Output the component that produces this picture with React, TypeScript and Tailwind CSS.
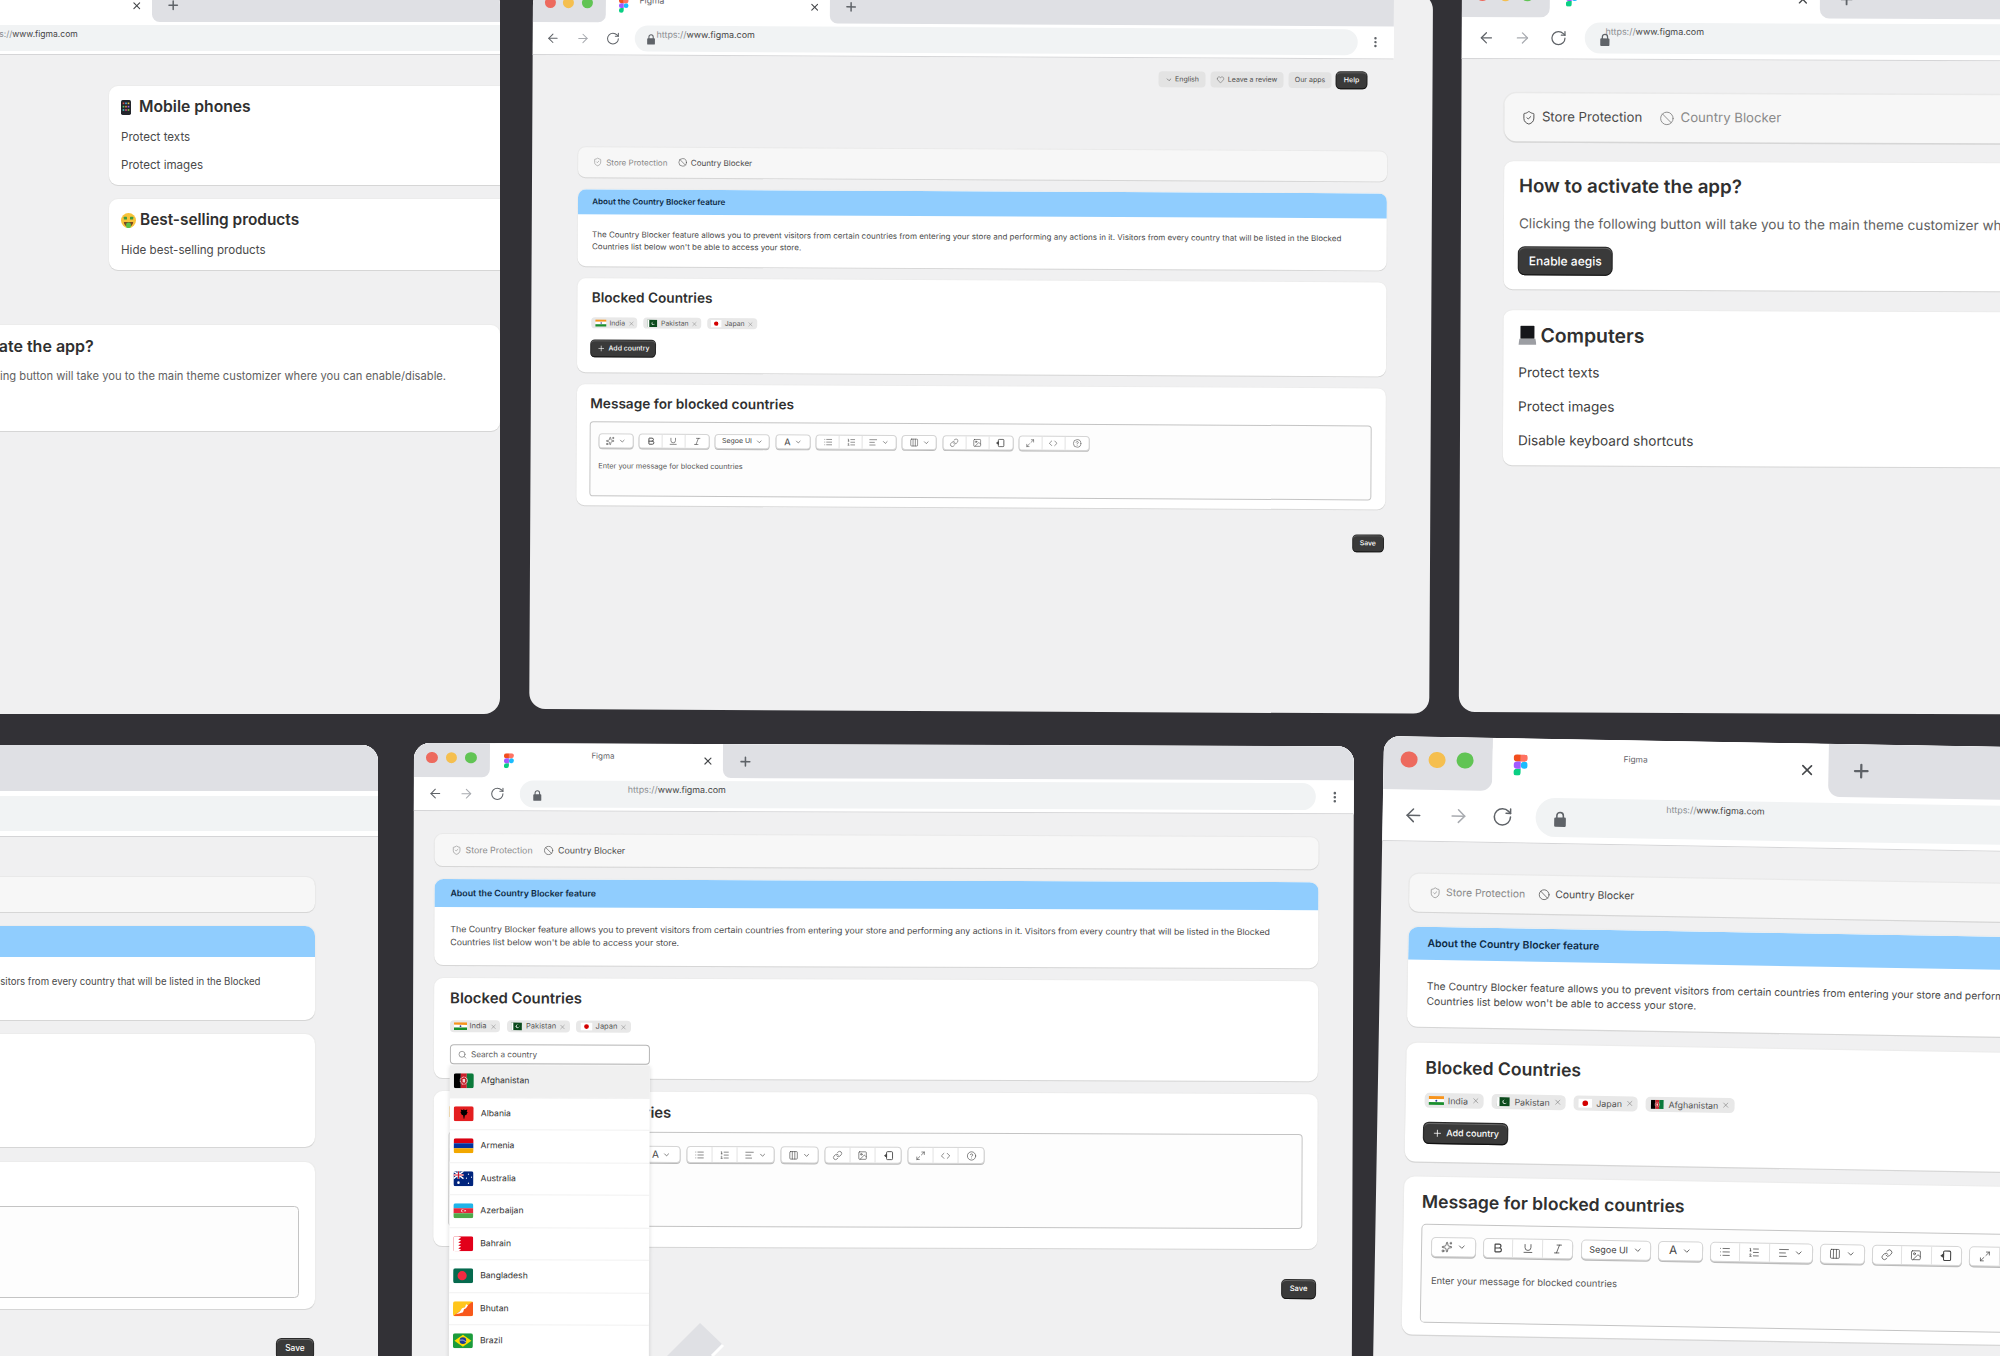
import type { ReactNode } from "react";
import clsx from "clsx";
import {
  AlignLeft,
  ArrowLeft,
  ArrowRight,
  Ban,
  Bold,
  ChevronDown,
  CircleHelp,
  Code,
  Columns3,
  EllipsisVertical,
  Heart,
  Image,
  Italic,
  Link,
  List,
  ListOrdered,
  Maximize2,
  Plus,
  RotateCw,
  Search,
  ShieldCheck,
  Sparkles,
  Underline,
  X,
} from "lucide-react";

const CARD = "rounded-[9px] bg-white shadow-[0_1px_0_#d6d6d6,0_0_0_1px_#ececec]";
const DARK_BTN =
  "rounded-[4px] bg-[#3a3a3a] text-white font-medium shadow-[0_1px_0_#111,0_0_0_1px_#2a2a2a,inset_0_1px_0_#666]";

function FigmaLogo({ className }: { className?: string }) {
  return (
    <svg viewBox="0 0 38 57" className={className}>
      <path d="M19 28.5a9.5 9.5 0 1 1 19 0 9.5 9.5 0 0 1-19 0z" fill="#1ABCFE" />
      <path d="M0 47.5A9.5 9.5 0 0 1 9.5 38H19v9.5a9.5 9.5 0 1 1-19 0z" fill="#0ACF83" />
      <path d="M19 0v19h9.5a9.5 9.5 0 1 0 0-19H19z" fill="#FF7262" />
      <path d="M0 9.5A9.5 9.5 0 0 0 9.5 19H19V0H9.5A9.5 9.5 0 0 0 0 9.5z" fill="#F24E1E" />
      <path d="M0 28.5A9.5 9.5 0 0 0 9.5 38H19V19H9.5A9.5 9.5 0 0 0 0 28.5z" fill="#A259FF" />
    </svg>
  );
}

function LockIcon() {
  return (
    <svg viewBox="0 0 10 13" className="h-[12px] w-[9px] shrink-0 translate-y-[1px]">
      <path d="M2.5 6V3.8a2.5 2.5 0 0 1 5 0V6" fill="none" stroke="#5f6368" strokeWidth="1.2" />
      <rect x="0.5" y="5.2" width="9" height="7.3" rx="1" fill="#5f6368" />
    </svg>
  );
}

function Flag({ code, className }: { code: string; className?: string }) {
  const cls = clsx("shrink-0 rounded-[2px]", className);
  switch (code) {
    case "in":
      return (
        <svg viewBox="0 0 20 12" className={cls}>
          <rect width="20" height="4" fill="#f7941d" />
          <rect y="4" width="20" height="4" fill="#fff" />
          <rect y="8" width="20" height="4" fill="#1a8f2e" />
          <circle cx="10" cy="6" r="1.3" fill="#2b3a8f" />
        </svg>
      );
    case "pk":
      return (
        <svg viewBox="0 0 20 15" className={cls}>
          <rect width="20" height="15" fill="#0b4a1c" />
          <rect width="4" height="15" fill="#fff" />
          <circle cx="12" cy="7.5" r="3.4" fill="#fff" />
          <circle cx="13" cy="6.8" r="3" fill="#0b4a1c" />
        </svg>
      );
    case "jp":
      return (
        <svg viewBox="0 0 20 14" className={cls}>
          <rect width="20" height="14" fill="#fff" />
          <circle cx="10" cy="7" r="4.2" fill="#d30000" />
        </svg>
      );
    case "af":
      return (
        <svg viewBox="0 0 20 15" className={cls}>
          <rect width="7" height="15" fill="#000" />
          <rect x="7" width="6" height="15" fill="#c8202a" />
          <rect x="13" width="7" height="15" fill="#0b7a3b" />
          <circle cx="10" cy="7.5" r="3.6" fill="none" stroke="#f4d6d6" strokeWidth="1" strokeDasharray="1 0.6" />
          <rect x="8.8" y="5.8" width="2.4" height="3.4" fill="#f4d6d6" />
        </svg>
      );
    case "al":
      return (
        <svg viewBox="0 0 20 15" className={cls}>
          <rect width="20" height="15" fill="#e41e20" />
          <path d="M10 2.5l1 1.6 2.6-.8-.6 2.6 1-.2-1.4 3-1.4.4-.6 3.4-.6 0-.6-3.4-1.4-.4-1.4-3 1 .2-.6-2.6 2.6.8z" fill="#000" />
        </svg>
      );
    case "am":
      return (
        <svg viewBox="0 0 20 15" className={cls}>
          <rect width="20" height="5" fill="#d90012" />
          <rect y="5" width="20" height="5" fill="#0033a0" />
          <rect y="10" width="20" height="5" fill="#f2a800" />
        </svg>
      );
    case "au":
      return (
        <svg viewBox="0 0 20 15" className={cls}>
          <rect width="20" height="15" fill="#00247d" />
          <path d="M0 0l10 7.5M10 0L0 7.5" stroke="#fff" strokeWidth="1.4" />
          <path d="M5 0v7.5M0 3.75h10" stroke="#fff" strokeWidth="2" />
          <path d="M5 0v7.5M0 3.75h10" stroke="#cf142b" strokeWidth="1" />
          <circle cx="5" cy="11.5" r="1.3" fill="#fff" />
          <circle cx="15" cy="3" r="0.6" fill="#fff" />
          <circle cx="18" cy="6" r="0.6" fill="#fff" />
          <circle cx="13" cy="7" r="0.6" fill="#fff" />
          <circle cx="15" cy="12" r="0.7" fill="#fff" />
        </svg>
      );
    case "az":
      return (
        <svg viewBox="0 0 20 15" className={cls}>
          <rect width="20" height="5" fill="#20b4e8" />
          <rect y="5" width="20" height="5" fill="#e4283c" />
          <rect y="10" width="20" height="5" fill="#4eaa4a" />
          <circle cx="9.5" cy="7.5" r="1.7" fill="#fff" />
          <circle cx="10" cy="7.5" r="1.4" fill="#e4283c" />
          <circle cx="11.8" cy="7.5" r="0.7" fill="#fff" />
        </svg>
      );
    case "bh":
      return (
        <svg viewBox="0 0 20 15" className={cls}>
          <rect width="20" height="15" fill="#e2001a" />
          <path d="M0 0h5L8 1.5 5 3l3 1.5L5 6l3 1.5L5 9l3 1.5L5 12l3 1.5L5 15H0z" fill="#fff" />
        </svg>
      );
    case "bd":
      return (
        <svg viewBox="0 0 20 15" className={cls}>
          <rect width="20" height="15" fill="#066a4e" />
          <circle cx="9" cy="7.5" r="4.6" fill="#f42a41" />
        </svg>
      );
    case "bt":
      return (
        <svg viewBox="0 0 20 15" className={cls}>
          <rect width="20" height="15" fill="#ffc61c" />
          <path d="M20 0v15H0z" fill="#f8581c" />
          <path d="M3 13l4-3 2-3 3-1 1-3 2 1-2 3-2 1-1 3-3 1z" fill="#fff" />
        </svg>
      );
    default:
      return (
        <svg viewBox="0 0 20 15" className={cls}>
          <rect width="20" height="15" fill="#1c9c3c" />
          <path d="M10 1.5L18.5 7.5 10 13.5 1.5 7.5z" fill="#fddc00" />
          <circle cx="10" cy="7.5" r="3.3" fill="#1f3a93" />
          <path d="M7 7a6 6 0 0 1 6 1.6" stroke="#fff" strokeWidth="0.6" fill="none" />
        </svg>
      );
  }
}

type ChromeProps = {
  zoom: string;
  url: string;
  tabText?: string;
  open?: boolean;
  width?: string;
  strip?: string;
  bar?: string;
};

function Chrome({ zoom, url, tabText, open, width, strip, bar }: ChromeProps) {
  return (
    <div className={clsx("shrink-0 bg-white", zoom, width)}>
      <div className={clsx("flex bg-white", strip ?? "h-[34px]")}>
        <div className="flex w-[76px] shrink-0 items-center gap-[8px] rounded-br-[8px] bg-[#dfe0e4] pb-[5px] pl-[12px]">
          <span className="h-[11.5px] w-[11.5px] rounded-full bg-[#ed6a5e]" />
          <span className="h-[11.5px] w-[11.5px] rounded-full bg-[#f5bf4f]" />
          <span className="h-[11.5px] w-[11.5px] rounded-full bg-[#61c454]" />
        </div>
        <div className="flex w-[233px] shrink-0 items-center justify-between rounded-t-[8px] bg-white pl-[14px] pr-[9px] text-[#5f6368]">
          <FigmaLogo className="h-[15px] w-[10px]" />
          <span className={clsx("mt-[-10px]", tabText ?? "ml-[-10px] text-[8px]")}>Figma</span>
          <X size={12} strokeWidth={2.3} className="text-[#45474a]" />
        </div>
        <div className="flex flex-1 items-center rounded-bl-[8px] bg-[#dfe0e4] pl-[15px] text-[#5f6368]">
          <Plus size={15} strokeWidth={2.5} />
        </div>
      </div>
      <div className={clsx("flex items-center border-b border-[#d5d5d7] bg-white pl-[14px]", bar ?? "h-[34px]")}>
        <ArrowLeft size={15} strokeWidth={1.7} className="text-[#5f6368]" />
        <ArrowRight size={15} strokeWidth={1.7} className="ml-[16px] text-[#a8abb0]" />
        <RotateCw size={15} strokeWidth={1.7} className="ml-[16px] text-[#5f6368]" />
        <div
          className={clsx(
            "ml-[15px] flex h-[27px] flex-1 items-center rounded-l-[14px] bg-[#f1f3f4] pl-[13px] text-[#444]",
            !open && "rounded-r-[14px]",
          )}
        >
          <LockIcon />
          <span className={url}>
            <span className="text-[#8a8d91]">https://</span>www.figma.com
          </span>
        </div>
        {open ? null : <EllipsisVertical size={14} strokeWidth={2.4} className="mx-[12px] text-[#5f6368]" />}
      </div>
    </div>
  );
}

function NavCard({ storeActive }: { storeActive?: boolean }) {
  return (
    <div
      className={clsx(
        "flex h-[32px] items-center gap-[11.5px] rounded-[8px] bg-[#f7f7f7] text-[8.8px] shadow-[0_1px_0_#d6d6d6,0_0_0_1px_#e9e9e9]",
        storeActive ? "pl-[11px]" : "pl-[17px]",
      )}
    >
      <span className={clsx("flex items-center gap-[4px]", storeActive ? "text-[#4a4a4a]" : "text-[#8a8a8a]")}>
        <ShieldCheck size={10} strokeWidth={1.5} />
        Store Protection
      </span>
      <span className={clsx("flex items-center gap-[4px]", storeActive ? "text-[#8a8a8a]" : "text-[#4a4a4a]")}>
        <Ban size={10} strokeWidth={1.5} />
        Country Blocker
      </span>
    </div>
  );
}

function About({ body }: { body?: string }) {
  return (
    <div className={clsx(CARD, "overflow-hidden")}>
      <div className="flex h-[28px] items-center bg-[#90cdfe] pl-[16px] text-[8.8px] font-semibold text-[#0d2a44]">
        About the Country Blocker feature
      </div>
      <p className={clsx("pl-[16px] pr-[44px] pt-[16px] text-[8.75px] leading-[13px] text-[#4a4a4a]", body ?? "h-[57px]")}>
        The Country Blocker feature allows you to prevent visitors from certain countries from entering your store and
        performing any actions in it. Visitors from every country that will be listed in the Blocked Countries list
        below won't be able to access your store.
      </p>
    </div>
  );
}

function Chip({ code, name }: { code: string; name: string }) {
  return (
    <span className="flex h-[12px] items-center gap-[3px] rounded-[4px] bg-[#e8e8e8] px-[3.5px] text-[7.5px] text-[#555]">
      <Flag code={code} className="h-[8px] w-[13px] rounded-none" />
      {name}
      <X size={7} strokeWidth={1.6} className="text-[#777]" />
    </span>
  );
}

const COUNTRIES = [
  ["af", "Afghanistan"],
  ["al", "Albania"],
  ["am", "Armenia"],
  ["au", "Australia"],
  ["az", "Azerbaijan"],
  ["bh", "Bahrain"],
  ["bd", "Bangladesh"],
  ["bt", "Bhutan"],
  ["br", "Brazil"],
  ["bg", "Bulgaria"],
];

function CountrySearch() {
  return (
    <div className="relative mt-[12px] w-[200px]">
      <div className="flex h-[20px] items-center gap-[4px] rounded-[4px] border border-[#b5b5b5] bg-white pl-[7px] text-[8.2px] text-[#5a5a5a]">
        <Search size={9} strokeWidth={1.5} />
        Search a country
      </div>
      <div className="absolute left-0 top-[21px] z-10 w-full bg-white shadow-[0_1px_4px_rgba(0,0,0,0.15)]">
        {COUNTRIES.map(([code, name], i) => (
          <div
            key={code}
            className={clsx(
              "flex h-[32.5px] items-center gap-[7px] border-b border-[#f1f1f1] pl-[4px] text-[8.6px] text-[#333]",
              i === 0 && "bg-[#f0f0f0]",
            )}
          >
            <Flag code={code} className="h-[15px] w-[20px]" />
            {name}
          </div>
        ))}
      </div>
    </div>
  );
}

function AddCountry() {
  return (
    <button className={clsx(DARK_BTN, "mt-[13px] flex h-[17px] w-[70px] items-center justify-center gap-[3px] text-[7.6px]")}>
      <Plus size={9} strokeWidth={1.8} />
      Add country
    </button>
  );
}

function Blocked({ chips, searching, pad }: { chips: string[][]; searching?: boolean; pad: string }) {
  return (
    <div className={clsx(CARD, "px-[16px]", pad, searching ? "pt-[11px]" : "pt-[12px]")}>
      <h3 className="text-[14.9px] font-semibold leading-[18px] text-[#303030]">Blocked Countries</h3>
      <div className="mt-[13px] flex gap-[6.5px]">
        {chips.map(([code, name]) => (
          <Chip key={code} code={code} name={name} />
        ))}
      </div>
      {searching ? <CountrySearch /> : <AddCountry />}
    </div>
  );
}

function Group({ children, wide }: { children: ReactNode; wide?: string }) {
  return (
    <div className={clsx("flex h-[17px] items-center rounded-[4px] border border-[#d5d5d5] bg-white text-[#444] shadow-[0_1px_0_#bbb]", wide)}>
      {children}
    </div>
  );
}

function Cell({ children, wide }: { children: ReactNode; wide?: string }) {
  return (
    <span className={clsx("flex h-full items-center justify-center gap-[4px] border-r border-[#e2e2e2] last:border-r-0", wide ?? "w-[25px]")}>
      {children}
    </span>
  );
}

function EditorBar() {
  const s = 10;
  return (
    <div className="flex items-center gap-[6px]">
      <Group>
        <Cell wide="w-[36px]">
          <Sparkles size={s} strokeWidth={1.5} />
          <ChevronDown size={8} />
        </Cell>
      </Group>
      <Group>
        <Cell><Bold size={s} strokeWidth={2.4} /></Cell>
        <Cell><Underline size={s} strokeWidth={1.6} /></Cell>
        <Cell><Italic size={s} strokeWidth={1.6} /></Cell>
      </Group>
      <Group>
        <Cell wide="w-[58px] text-[7.6px]">
          Segoe UI
          <ChevronDown size={8} />
        </Cell>
      </Group>
      <Group>
        <Cell wide="w-[36px] text-[10px]">
          A
          <ChevronDown size={8} />
        </Cell>
      </Group>
      <Group>
        <Cell><List size={s} strokeWidth={1.5} /></Cell>
        <Cell><ListOrdered size={s} strokeWidth={1.5} /></Cell>
        <Cell wide="w-[36px]">
          <AlignLeft size={s} strokeWidth={1.5} />
          <ChevronDown size={8} />
        </Cell>
      </Group>
      <Group>
        <Cell wide="w-[36px]">
          <Columns3 size={s} strokeWidth={1.5} />
          <ChevronDown size={8} />
        </Cell>
      </Group>
      <Group>
        <Cell><Link size={s} strokeWidth={1.5} /></Cell>
        <Cell><Image size={s} strokeWidth={1.5} /></Cell>
        <Cell>
          <svg viewBox="0 0 10 10" className="h-[10px] w-[10px]" fill="none" stroke="currentColor" strokeWidth="0.9">
            <rect x="3" y="1" width="6" height="8" rx="1" />
            <path d="M3 3.5L1 5l2 1.5z" fill="currentColor" />
          </svg>
        </Cell>
      </Group>
      <Group>
        <Cell><Maximize2 size={s} strokeWidth={1.5} /></Cell>
        <Cell><Code size={s} strokeWidth={1.5} /></Cell>
        <Cell><CircleHelp size={s} strokeWidth={1.5} /></Cell>
      </Group>
    </div>
  );
}

function Message({ editor, bottom }: { editor: string; bottom: string }) {
  return (
    <div className={clsx(CARD, "px-[15px] pt-[12px]", bottom)}>
      <h3 className="text-[14.9px] font-semibold leading-[18px] text-[#303030]">Message for blocked countries</h3>
      <div className={clsx("mt-[10px] rounded-[4px] border border-[#c4c4c4] bg-[#fdfdfd]", editor)}>
        <EditorBar />
        <p className="mt-[14px] text-[8px] leading-[12px] text-[#555]">Enter your message for blocked countries</p>
      </div>
    </div>
  );
}

const BASE_CHIPS = [
  ["in", "India"],
  ["pk", "Pakistan"],
  ["jp", "Japan"],
];

type BlockerProps = {
  chips?: string[][];
  searching?: boolean;
  aboutBody?: string;
  blockedPad?: string;
  editor?: string;
  bottom?: string;
  saveGap?: string;
};

function Blocker({ chips, searching, aboutBody, blockedPad, editor, bottom, saveGap }: BlockerProps) {
  return (
    <>
      <div className="flex flex-col gap-[13px]">
        <NavCard />
        <About body={aboutBody} />
        <Blocked chips={chips ?? BASE_CHIPS} searching={searching} pad={blockedPad ?? "pb-[18px]"} />
        <Message editor={editor ?? "h-[84px] pl-[8px] pt-[11px]"} bottom={bottom ?? "pb-[10px]"} />
      </div>
      <div className={clsx("flex justify-end pr-[2px]", saveGap ?? "mt-[28px]")}>
        <button className={clsx(DARK_BTN, "h-[18px] w-[33px] text-[7.6px]")}>Save</button>
      </div>
    </>
  );
}

function Win({ className, children }: { className: string; children: ReactNode }) {
  return <div className={clsx("absolute flex origin-top-left flex-col overflow-hidden rounded-[16px] bg-[#f0f0f1]", className)}>{children}</div>;
}

function EmojiPhone() {
  return (
    <svg viewBox="0 0 12 18" className="h-[15px] w-[10px] shrink-0">
      <rect width="12" height="18" rx="2" fill="#23252b" />
      <rect x="2" y="3" width="2" height="2" fill="#e0534a" />
      <rect x="5" y="3" width="2" height="2" fill="#4aa3e0" />
      <rect x="8" y="3" width="2" height="2" fill="#e0c14a" />
      <rect x="2" y="7" width="2" height="2" fill="#5cc46a" />
      <rect x="5" y="7" width="2" height="2" fill="#e08a4a" />
      <rect x="8" y="7" width="2" height="2" fill="#a06ae0" />
      <rect x="2" y="11" width="2" height="2" fill="#4ac4c0" />
      <rect x="5" y="11" width="2" height="2" fill="#e04a8a" />
      <rect x="8" y="11" width="2" height="2" fill="#8ac44a" />
    </svg>
  );
}

function EmojiMoney() {
  return (
    <svg viewBox="0 0 16 16" className="h-[15px] w-[15px] shrink-0">
      <circle cx="8" cy="8" r="8" fill="#f8c33a" />
      <rect x="3" y="4" width="3.4" height="3" rx="0.6" fill="#3f9a3f" />
      <rect x="9.6" y="4" width="3.4" height="3" rx="0.6" fill="#3f9a3f" />
      <path d="M3 9.5h10a5 5 0 0 1-10 0z" fill="#7a4a20" />
      <rect x="5.5" y="10" width="5" height="6" rx="2" fill="#58c04a" />
    </svg>
  );
}

function EmojiLaptop() {
  return (
    <svg viewBox="0 0 18 19" className="h-[20px] w-[18px] shrink-0">
      <rect x="2" y="0" width="14" height="13" rx="0.6" fill="#15161a" />
      <path d="M1 13h16l1 6H0z" fill="#9c9ea3" />
    </svg>
  );
}

export default function App() {
  return (
    <div className="relative h-[1356px] w-[2000px] overflow-hidden bg-[#323136] [font-family:Inter,sans-serif]">
      {/* top left: feature list */}
      <Win className="left-[-145px] top-[-11px] h-[725px] w-[645px]">
        <Chrome zoom="[zoom:0.96]" url="ml-[6px] mt-[-8px] text-[8.9px]" tabText="ml-[-140px] text-[9px]" open width="w-[800px]" bar="h-[35px]" />
        <div className={clsx(CARD, "ml-[254px] mt-[31px] h-[99px] w-[600px] shrink-0 pl-[12px] pt-[12px] text-[11.6px] text-[#4a4a4a]")}>
          <h3 className="flex items-center gap-[8px] text-[15.7px] font-semibold leading-[18px] text-[#303030]">
            <EmojiPhone />
            Mobile phones
          </h3>
          <p className="mt-[13px] leading-[16px]">Protect texts</p>
          <p className="mt-[12px] leading-[16px]">Protect images</p>
        </div>
        <div className={clsx(CARD, "ml-[254px] mt-[14px] h-[71px] w-[600px] shrink-0 pl-[12px] pt-[12px] text-[11.6px] text-[#4a4a4a]")}>
          <h3 className="flex items-center gap-[4px] text-[15.4px] font-semibold leading-[18px] text-[#303030]">
            <EmojiMoney />
            Best-selling products
          </h3>
          <p className="mt-[13px] leading-[16px]">Hide best-selling products</p>
        </div>
        <div className={clsx(CARD, "mt-[55px] h-[106px] shrink-0 rounded-[9px] pl-[48px] pt-[11px]")}>
          <h3 className="text-[16px] font-semibold leading-[20px] text-[#303030]">How to activate the app?</h3>
          <p className="mt-[12px] whitespace-nowrap text-[11.2px] leading-[16px] text-[#616161]">
            Clicking the following button will take you to the main theme customizer where you can enable/disable.
          </p>
        </div>
      </Win>

      {/* top middle: with the app's own top buttons */}
      <Win className="left-[533px] top-[-11px] h-[720px] w-[900px] rotate-[0.3deg]">
        <Chrome zoom="[zoom:0.96]" url="ml-[1px] mt-[-9px] text-[9.3px]" tabText="ml-[-140px] text-[9px]" width="w-[897px]" bar="h-[35px]" />
        <div className="mt-[13px] flex justify-end gap-[5px] pr-[66px] text-[7px] text-[#4a4a4a]">
          <span className="flex h-[16px] w-[47px] items-center justify-center gap-[3px] rounded-[4px] bg-[#e3e3e3]">
            <ChevronDown size={7} />
            English
          </span>
          <span className="flex h-[16px] w-[73px] items-center justify-center gap-[3px] rounded-[4px] bg-[#e3e3e3]">
            <Heart size={8} strokeWidth={1.4} />
            Leave a review
          </span>
          <span className="flex h-[16px] w-[43px] items-center justify-center rounded-[4px] bg-[#e3e3e3]">Our apps</span>
          <span className={clsx(DARK_BTN, "flex h-[16px] w-[30px] items-center justify-center")}>Help</span>
        </div>
        <div className="ml-[50px] mt-[69px] w-[884px] [zoom:0.915]">
          <Blocker editor="h-[82px] pl-[8px] pt-[12px]" saveGap="mt-[28px]" />
        </div>
      </Win>

      {/* top right: activation */}
      <Win className="left-[1462px] top-[-22px] h-[734px] w-[700px] rotate-[0.25deg]">
        <Chrome zoom="[zoom:1.16]" url="ml-[-4px] mt-[-12px] text-[7.7px]" open width="w-[800px]" bar="h-[36px]" />
        <div className="ml-[43px] mt-[34px] w-[800px] shrink-0">
          <div className="[zoom:1.5]">
            <NavCard storeActive />
          </div>
          <div className={clsx(CARD, "mt-[20px] h-[128px] pl-[15px] pt-[13px]")}>
            <h3 className="text-[18.7px] font-semibold leading-[24px] text-[#303030]">How to activate the app?</h3>
            <p className="mt-[16px] whitespace-nowrap text-[13.6px] leading-[18px] text-[#616161]">
              Clicking the following button will take you to the main theme customizer where you can enable/disable.
            </p>
            <button className={clsx(DARK_BTN, "mt-[15px] flex h-[27px] w-[93px] items-center justify-center rounded-[6px] text-[12px]")}>
              Enable aegis
            </button>
          </div>
          <div className={clsx(CARD, "mt-[21px] h-[155px] pl-[15px] pt-[12px] text-[13.6px] text-[#3f3f3f]")}>
            <h3 className="flex items-center gap-[4px] text-[19.4px] font-semibold leading-[26px] text-[#303030]">
              <EmojiLaptop />
              Computers
            </h3>
            <p className="mt-[14px] leading-[20px]">Protect texts</p>
            <p className="mt-[14px] leading-[20px]">Protect images</p>
            <p className="mt-[14px] leading-[20px]">Disable keyboard shortcuts</p>
          </div>
        </div>
      </Win>

      {/* bottom left: cut off by the page edge */}
      <Win className="left-[-700px] top-[745px] h-[700px] w-[1078px]">
        <Chrome zoom="[zoom:1.3]" url="ml-[6px] mt-[-8px] text-[8.9px]" open width="w-[1200px]" strip="h-[35px]" bar="h-[36px]" />
        <div className="ml-[39px] mt-[36px] w-[884px] shrink-0 [zoom:1.1]">
          <Blocker saveGap="mt-[27px]" />
        </div>
      </Win>

      {/* bottom middle: with the country list open */}
      <Win className="left-[414px] top-[743px] h-[700px] w-[940px] rotate-[0.2deg]">
        <Chrome zoom="" url="ml-[86px] mt-[-9px] text-[8.9px]" width="w-[940px]" />
        <div className="ml-[21px] mt-[23px] w-[884px]">
          <Blocker
            searching
            aboutBody="h-[58px]"
            blockedPad="pb-[14px]"
            editor="h-[95px] pl-0 pt-[13px]"
            bottom="pb-[20px]"
            saveGap="mt-[31px]"
          />
        </div>
      </Win>
      <svg viewBox="0 0 60 33" className="absolute left-[665px] top-[1323px] h-[33px] w-[60px]">
        <path d="M35 0l23 22-11 11H2z" fill="#dfe0e4" />
        <path d="M58 22L47 33" stroke="#fff" strokeWidth="3" />
      </svg>

      {/* bottom right: Afghanistan added */}
      <Win className="left-[1384px] top-[736px] h-[800px] w-[1300px] rotate-[1deg]">
        <Chrome
          zoom="[zoom:1.44]"
          url="ml-[69px] mt-[-14px] text-[6.2px]"
          tabText="ml-[-38px] text-[5.8px]"
          open
          width="w-[1400px]"
          strip="h-[37px]"
          bar="h-[36px]"
        />
        <div className="ml-[24px] mt-[27px] w-[884px] shrink-0 [zoom:1.18]">
          <Blocker
            chips={[...BASE_CHIPS, ["af", "Afghanistan"]]}
            blockedPad="pb-[16px]"
            editor="h-[84px] pl-[8px] pt-[10px]"
          />
        </div>
      </Win>
    </div>
  );
}
